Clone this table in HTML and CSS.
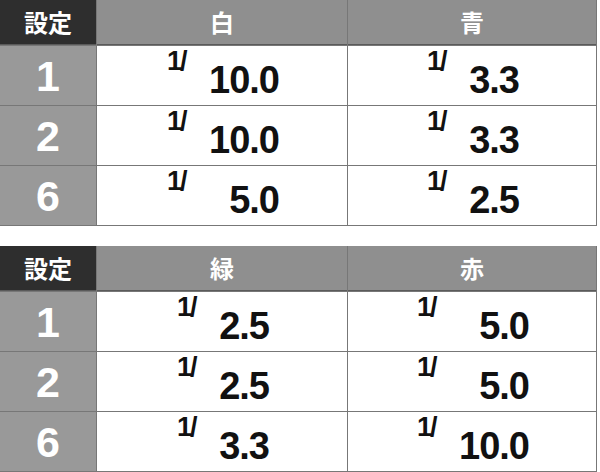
FILE: index.html
```html
<!DOCTYPE html>
<html lang="ja">
<head>
<meta charset="utf-8">
<link rel="stylesheet" href="styles.css">
</head>
<body>
<div class="page">
  <div class="table">
    <div class="hd dark">設定</div>
    <div class="hd">白</div>
    <div class="hd">青</div>

    <div class="set">1</div>
    <div class="val"><span class="frac wide"><span class="sup">1/</span><span class="num">10.0</span></span></div>
    <div class="val"><span class="frac"><span class="sup">1/</span><span class="num">3.3</span></span></div>

    <div class="set">2</div>
    <div class="val"><span class="frac wide"><span class="sup">1/</span><span class="num">10.0</span></span></div>
    <div class="val"><span class="frac"><span class="sup">1/</span><span class="num">3.3</span></span></div>

    <div class="set">6</div>
    <div class="val"><span class="frac wide"><span class="sup">1/</span><span class="num">5.0</span></span></div>
    <div class="val"><span class="frac"><span class="sup">1/</span><span class="num">2.5</span></span></div>
  </div>

  <div class="table">
    <div class="hd dark">設定</div>
    <div class="hd">緑</div>
    <div class="hd">赤</div>

    <div class="set">1</div>
    <div class="val"><span class="frac"><span class="sup">1/</span><span class="num">2.5</span></span></div>
    <div class="val"><span class="frac wide"><span class="sup">1/</span><span class="num">5.0</span></span></div>

    <div class="set">2</div>
    <div class="val"><span class="frac"><span class="sup">1/</span><span class="num">2.5</span></span></div>
    <div class="val"><span class="frac wide"><span class="sup">1/</span><span class="num">5.0</span></span></div>

    <div class="set">6</div>
    <div class="val"><span class="frac"><span class="sup">1/</span><span class="num">3.3</span></span></div>
    <div class="val"><span class="frac wide"><span class="sup">1/</span><span class="num">10.0</span></span></div>
  </div>
</div>
</body>
</html>
```

FILE: styles.css
```css
html, body {
  margin: 0;
  padding: 0;
  background: #ffffff;
}

.page {
  width: 600px;
  display: flex;
  flex-direction: column;
  gap: 20px;
}

.table {
  width: 597px;
  display: grid;
  grid-template-columns: 96px 250px 248px;
  grid-template-rows: 45px 59px 59px 59px;
  gap: 1px;
  padding: 0 1px 1px 0;
  box-sizing: border-box;
  background: #777777;
  font-family: "Liberation Sans", "Noto Sans CJK JP", sans-serif;
  font-weight: bold;
}

.hd {
  background: #8f8f8f;
  color: #ffffff;
  display: flex;
  align-items: center;
  justify-content: center;
  font-family: "Noto Sans CJK JP", sans-serif;
  font-weight: 700;
  font-size: 24px;
  line-height: 1;
  border-bottom: 1px solid #5a5a5a;
}

.hd.dark {
  background: #2e2e2e;
}

.set {
  background: #999999;
  color: #ffffff;
  display: flex;
  align-items: center;
  justify-content: center;
  font-size: 43px;
  line-height: 1;
  padding-top: 2px;
}

.val {
  background: #ffffff;
  display: flex;
  align-items: center;
  justify-content: center;
  padding-left: 2px;
}

.frac {
  width: 112px;
  display: flex;
  justify-content: space-between;
  align-items: flex-start;
  color: #111111;
}

.frac:not(.wide) {
  width: 92px;
}

.sup {
  font-size: 27px;
  line-height: 1;
  letter-spacing: -2px;
  margin-top: -4px;
}

.num {
  font-size: 38px;
  line-height: 1;
  letter-spacing: -1px;
  margin-top: 9px;
}
```
